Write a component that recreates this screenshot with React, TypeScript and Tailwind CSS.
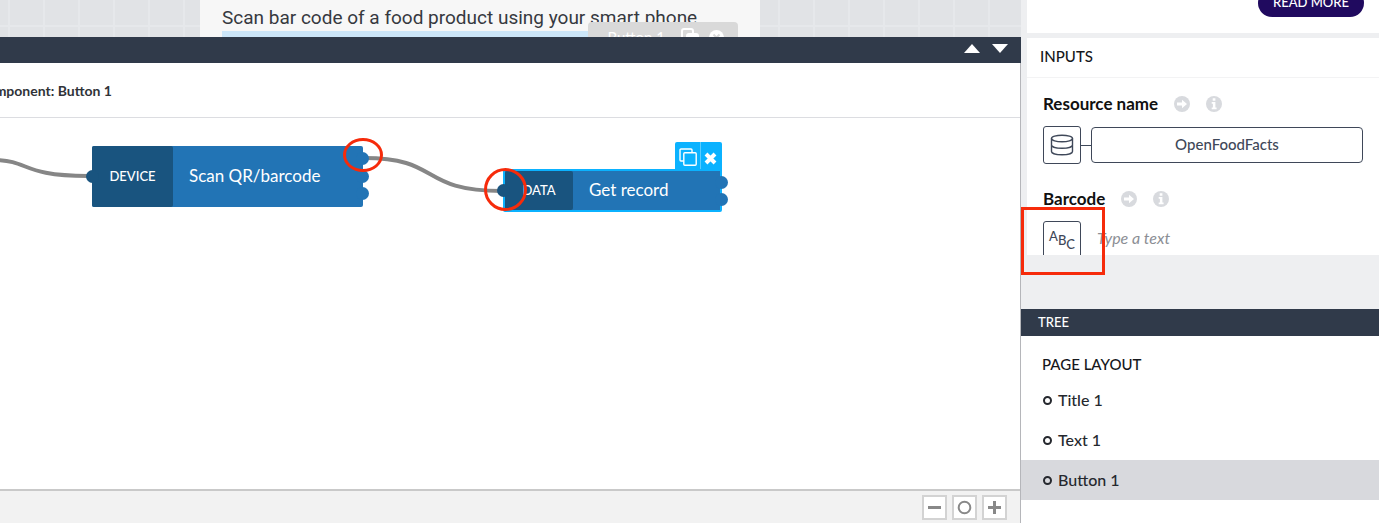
import React from "react";

const RESOURCE_ICON = (
  <svg width="24" height="24" viewBox="0 0 24 24" fill="none" stroke="#3f4859" strokeWidth="1.4" aria-hidden="true">
    <ellipse cx="12" cy="5.5" rx="10.5" ry="3.3" />
    <path d="M1.500 5.500v13c0 1.900 4.700 3.300 10.500 3.300s10.500-1.400 10.500-3.300v-13M1.500 12c0 1.900 4.700 3.300 10.500 3.300s10.500-1.400 10.500-3.300" />
  </svg>
);

function ArrowDot() {
  return (
    <svg width="16" height="16" viewBox="0 0 16 16" aria-hidden="true">
      <circle cx="8" cy="8" r="8" fill="#d8dade" />
      <path d="M3 6.500h5V3.800L13 8l-5 4.200V9.500H3z" fill="#fff" />
    </svg>
  );
}

function InfoDot() {
  return (
    <svg width="16" height="16" viewBox="0 0 16 16" aria-hidden="true">
      <circle cx="8" cy="8" r="8" fill="#d8dade" />
      <path d="M6.700 2.300h2.700v2.500H6.700zM5.700 6h3.700v5.500h1.200v1.700H5.700v-1.700h1.200V7.700H5.700z" fill="#fff" />
    </svg>
  );
}

function FieldLabel({ text, id }: { text: string; id: string }) {
  return (
    <div className="flex h-6 items-center">
      <label htmlFor={id} className="text-[17px] font-bold text-[#111]">{text}</label>
      <button aria-label={`Link ${text}`} className="ml-4"><ArrowDot /></button>
      <button aria-label={`About ${text}`} className="ml-4"><InfoDot /></button>
    </div>
  );
}

function Preview() {
  return (
    <section className="relative flex h-[37px] items-start overflow-hidden bg-[#e1e3e6] bg-[linear-gradient(90deg,#e6e8eb_2px,transparent_2px),linear-gradient(#e6e8eb_2px,transparent_2px)] bg-[size:35px_35px] bg-[position:8px_25px] pl-[200px]">
      <div className="relative h-[37px] w-[560px] bg-[#f7f7f7] px-[22px] pt-[6px]">
        <p className="h-[25px] whitespace-nowrap font-[Roboto,sans-serif] text-[19px] leading-6 text-[#36393f]">
          Scan bar code of a food product using your smart phone.
        </p>
        <div className="h-2 bg-[#cce6f9]" />
        <div className="absolute top-[22px] right-[22px] flex h-[30px] w-[150px] items-center justify-end gap-[10px] rounded-t-[4px] bg-[#d9d9d9] pr-[14px] text-[15px] text-white">
          <span className="mr-[6px]">Button 1</span>
          <svg width="18" height="18" viewBox="0 0 18 18" fill="none" stroke="#fff" strokeWidth="2" aria-hidden="true">
            <path d="M5 12H3a2 2 0 0 1-2-2V3a2 2 0 0 1 2-2h7a2 2 0 0 1 2 2v2" />
            <rect x="6" y="6" width="11" height="11" rx="2" fill="#fff" />
          </svg>
          <svg width="15" height="15" viewBox="0 0 15 15" aria-hidden="true">
            <circle cx="7.500" cy="7.500" r="7.500" fill="#fff" />
            <path d="M4.500 4.500l6 6m0-6l-6 6" stroke="#d9d9d9" strokeWidth="2" />
          </svg>
        </div>
      </div>
    </section>
  );
}

function Port({ place }: { place: string }) {
  return <span className={`absolute size-[13px] rounded-full ${place}`} />;
}

function Canvas() {
  return (
    <div className="relative min-h-[371px] flex-1 overflow-hidden bg-white">
      <svg className="absolute top-0 left-0" width="740" height="110" fill="none" stroke="#868686" strokeWidth="4" aria-hidden="true">
        <path d="M-4 42C30 43 22 58 88 58" />
        <path d="M364 40C442 40 418 73 502 73" />
      </svg>

      <div className="absolute top-7 left-[92px] flex h-[61px] w-[271px] rounded-[2px] bg-[#2274b5] text-white">
        <Port place="-left-[6px] top-6 bg-[#19547f]" />
        <Port place="-right-[6px] top-[6px] bg-[#2274b5]" />
        <Port place="-right-[6px] top-6 bg-[#2274b5]" />
        <Port place="-right-[6px] top-[41px] bg-[#2274b5]" />
        <span className="flex w-[81px] items-center justify-center rounded-[2px] bg-[#19547f] text-[13px] font-medium">DEVICE</span>
        <span className="flex items-center pb-[2px] pl-4 text-[17px]">Scan QR/barcode</span>
      </div>

      <div className="absolute top-6 left-[675px] flex h-[30px] w-[47px] divide-x divide-[#5accff] rounded-t-[2px] bg-[#0bb2ff]">
        <button aria-label="Duplicate" className="flex w-[26px] items-center justify-center">
          <svg width="18" height="18" viewBox="0 0 18 18" fill="none" stroke="#fff" strokeWidth="1.400" aria-hidden="true">
            <path d="M4.500 13H2a1 1 0 0 1-1-1V2a1 1 0 0 1 1-1h10a1 1 0 0 1 1 1v2.500" />
            <rect x="4.800" y="4.800" width="12.400" height="12.400" rx="1" />
          </svg>
        </button>
        <button aria-label="Remove" className="flex flex-1 items-center justify-center pr-[2px] pt-[2px]">
          <svg width="13" height="13" viewBox="0 0 13 13" stroke="#fff" strokeWidth="4" aria-hidden="true">
            <path d="M2 2l9 9M11 2l-9 9" />
          </svg>
        </button>
      </div>

      <div className="absolute top-[51px] left-[503px] flex h-[43px] w-[219px] rounded-[2px] border-2 border-[#0bb2ff] bg-[#2274b5] text-white">
        <Port place="-left-2 top-[13px] bg-[#19547f]" />
        <Port place="-right-2 top-[5px] bg-[#2274b5]" />
        <Port place="-right-2 top-[22px] bg-[#2274b5]" />
        <span className="flex w-[68px] items-center justify-center rounded-[2px] bg-[#19547f] text-[13px] font-medium">DATA</span>
        <span className="flex items-center pb-[2px] pl-4 text-[17px]">Get record</span>
      </div>

      <span className="absolute top-5 left-[343px] h-[34px] w-10 rounded-[50%] border-3 border-[#f62b0b]" />
      <span className="absolute top-[50px] left-[484px] size-[43px] rounded-full border-3 border-[#f62b0b]" />
    </div>
  );
}

function ZoomControls() {
  const box = "flex size-[25px] items-center justify-center border-2 border-[#d3d3d3] bg-white";
  return (
    <footer className="flex h-[34px] items-center justify-end gap-[5px] border-t-2 border-[#c9c9c9] bg-[#f2f2f2] pr-[13px]">
      <button aria-label="Zoom out" className={box}>
        <svg width="13" height="13" stroke="#888" strokeWidth="3"><path d="M0 6.500h13" /></svg>
      </button>
      <button aria-label="Reset zoom" className={box}>
        <svg width="15" height="15" fill="none" stroke="#888" strokeWidth="2"><circle cx="7.500" cy="7.500" r="5.800" /></svg>
      </button>
      <button aria-label="Zoom in" className={box}>
        <svg width="13" height="13" stroke="#888" strokeWidth="3"><path d="M0 6.500h13M6.500 0v13" /></svg>
      </button>
    </footer>
  );
}

function TreeItem({ name, active = false }: { name: string; active?: boolean }) {
  return (
    <li className={active ? "bg-[#d8d9dd]" : ""}>
      <a href="#" className="flex h-10 items-center gap-[6px] pl-[22px] text-[16px] font-medium text-[#25282e]">
        <span className="size-[9px] rounded-full border-2 border-[#25282e]" />
        {name}
      </a>
    </li>
  );
}

function Sidebar() {
  return (
    <aside className="relative flex w-[358px] shrink-0 flex-col bg-[#eeeff1]">
      <div className="ml-[6px] flex h-[33px] items-end justify-end overflow-hidden bg-white pr-[15px] pb-4">
        <button className="h-7 w-[106px] shrink-0 rounded-full bg-[#200a5f] text-[13px] font-medium text-white">READ MORE</button>
      </div>
      <section className="mt-[5px] ml-[6px] h-[217px] overflow-hidden bg-white">
        <h2 className="flex h-10 items-center border-b border-[#f3f3f4] pb-[2px] pl-[13px] text-[15px] font-medium text-[#16181c]">INPUTS</h2>
        <div className="px-4 pt-[14px]">
          <FieldLabel text="Resource name" id="resource" />
          <div className="mt-[10px] flex items-center">
            <span className="flex size-[38px] items-center justify-center rounded-[3px] border border-[#3f4859]">{RESOURCE_ICON}</span>
            <span className="h-px w-[10px] bg-[#3f4859]" />
            <button id="resource" className="h-9 flex-1 rounded-[4px] border border-[#3f4859] pb-[2px] text-[15px] font-medium text-[#3f4859]">OpenFoodFacts</button>
          </div>
          <div className="mt-[23px]"><FieldLabel text="Barcode" id="barcode" /></div>
          <div className="mt-[10px] flex items-start">
            <span className="flex size-[38px] shrink-0 items-start justify-center rounded-[3px] border border-[#3f4859] pt-[6px] text-[13px] leading-4 font-medium text-[#3f4859]">
              <span>A</span><span className="pt-1">B</span><span className="pt-2">C</span>
            </span>
            <input id="barcode" placeholder="Type a text" className="ml-4 h-8 min-w-0 flex-1 bg-transparent text-[16px] italic placeholder:text-[#8b8e94]" />
          </div>
        </div>
      </section>
      <h2 className="mt-[54px] flex h-[27px] items-center bg-[#303a4a] pl-[17px] text-[13px] font-medium text-white">TREE</h2>
      <nav className="flex-1 bg-white pt-3">
        <h3 className="flex h-8 items-center pl-[21px] text-[15px] font-medium text-[#16181c]">PAGE LAYOUT</h3>
        <ul>
          <TreeItem name="Title 1" />
          <TreeItem name="Text 1" />
          <TreeItem name="Button 1" active />
        </ul>
      </nav>
      <span className="pointer-events-none absolute top-[207px] left-0 h-[68px] w-[84px] border-3 border-[#f62b0b]" />
    </aside>
  );
}

export default function App() {
  return (
    <div className="flex min-h-screen bg-white pr-[5px] pb-[2px] font-['Lato',sans-serif]">
      <main className="flex min-w-0 flex-1 flex-col">
        <Preview />
        <header className="flex h-[26px] items-start justify-end gap-3 bg-[#303a4a] pt-[7px] pr-[13px]">
          <button aria-label="Expand panel"><svg width="16" height="9" fill="#fff"><path d="M0 9L8 0l8 9z" /></svg></button>
          <button aria-label="Collapse panel"><svg width="16" height="9" fill="#fff"><path d="M0 0h16L8 9z" /></svg></button>
        </header>
        <div className="flex min-h-0 flex-1 flex-col border-r border-[#b5b6ba]">
          <div className="flex h-[55px] items-center border-b border-[#dcdde1]">
            <p className="flex w-28 justify-end overflow-hidden text-[14px] font-bold whitespace-nowrap text-[#303338]">component: Button 1</p>
          </div>
          <Canvas />
          <ZoomControls />
        </div>
      </main>
      <Sidebar />
    </div>
  );
}
